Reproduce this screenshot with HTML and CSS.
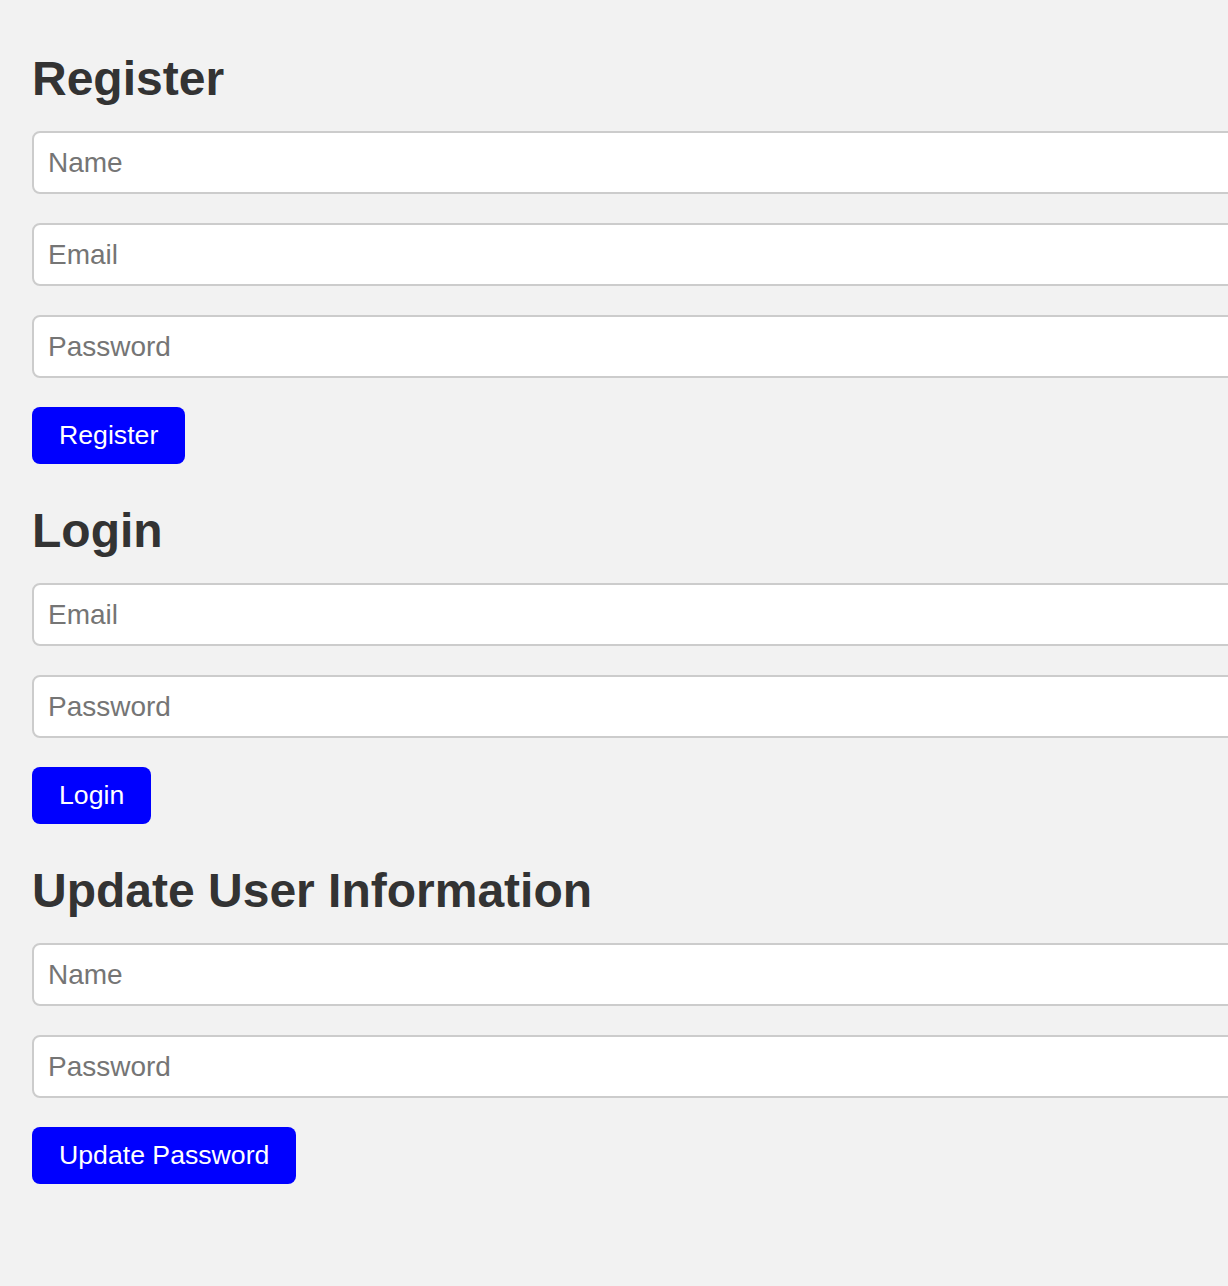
FILE: index.html
```html
<!DOCTYPE html>
<html lang="en">
<head>
<meta charset="utf-8">
<title>User Forms</title>
<link rel="stylesheet" href="styles.css">
</head>
<body>
<main class="page">
  <section class="form-section">
    <h2 class="title">Register</h2>
    <input class="field" type="text" placeholder="Name">
    <input class="field" type="email" placeholder="Email">
    <input class="field" type="password" placeholder="Password">
    <button class="btn" type="button">Register</button>
  </section>
  <section class="form-section">
    <h2 class="title">Login</h2>
    <input class="field" type="email" placeholder="Email">
    <input class="field" type="password" placeholder="Password">
    <button class="btn" type="button">Login</button>
  </section>
  <section class="form-section">
    <h2 class="title">Update User Information</h2>
    <input class="field" type="text" placeholder="Name">
    <input class="field" type="password" placeholder="Password">
    <button class="btn" type="button">Update Password</button>
  </section>
</main>
</body>
</html>
```
FILE: styles.css
```css
html, body {
  margin: 0;
  padding: 0;
  background: #f2f2f2;
}

body {
  font-family: "Liberation Sans", Arial, sans-serif;
  color: #333;
}

.page {
  padding: 12px 0 60px 32px;
  display: flex;
  flex-direction: column;
  overflow: hidden;
}

.form-section {
  display: flex;
  flex-direction: column;
  align-items: flex-start;
}

.title {
  margin: 40px 0 25px;
  font-size: 48px;
  line-height: 54px;
  font-weight: bold;
  color: #333;
}

.field {
  display: block;
  box-sizing: border-box;
  width: calc(100% + 40px);
  height: 63px;
  margin: 0 0 29px;
  padding: 0 14px;
  border: 2px solid #ccc;
  border-radius: 8px;
  background: #fff;
  font-family: "Liberation Sans", Arial, sans-serif;
  font-size: 28px;
  color: #333;
  outline: none;
}

.field::placeholder {
  color: #757575;
  opacity: 1;
}

.btn {
  box-sizing: border-box;
  height: 57px;
  padding: 0 27px;
  margin: 0;
  border: none;
  border-radius: 8px;
  background: #0000ff;
  color: #fff;
  font-family: "Liberation Sans", Arial, sans-serif;
  font-size: 26.67px;
  line-height: 57px;
  cursor: pointer;
}
```
